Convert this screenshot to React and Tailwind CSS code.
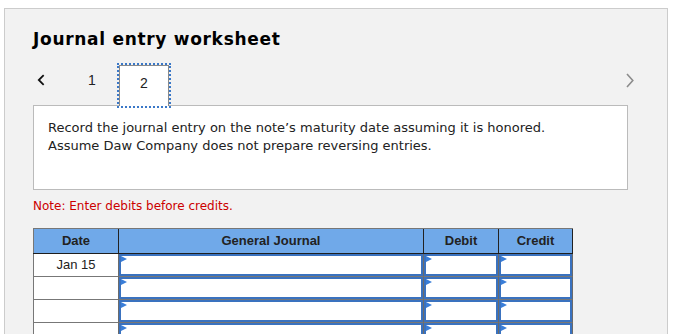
import React from "react";

const verdana = { fontFamily: '"DejaVu Sans", Verdana, sans-serif' };
const arial = { fontFamily: '"Liberation Sans", Arial, sans-serif' };

function InputCell({ w, last }) {
  return (
    <div
      className={`h-full border-l border-[#6b6b6b] ${last ? "border-r" : ""} border-b border-b-[#777] bg-[#777] ${w}`}
    >
      <div className="relative h-full border-2 border-[#3a72bf] bg-white">
        <span className="absolute left-0 top-0 h-0 w-0 border-y-[3px] border-l-[6px] border-y-transparent border-l-[#3a7ed8]"></span>
      </div>
    </div>
  );
}

function Row({ date }) {
  return (
    <div className="flex h-[23px]">
      <div
        className="flex h-full w-[85px] items-center justify-center border-b border-l border-[#777] bg-white text-[13px] text-[#222]"
        style={arial}
      >
        {date}
      </div>
      <InputCell w="w-[305px]" />
      <InputCell w="w-[75px]" />
      <InputCell w="w-[75px]" last />
    </div>
  );
}

export default function App() {
  return (
    <div className="h-[334px] overflow-hidden bg-white pl-[4px] pt-[8px]">
      <div className="h-[400px] w-[664px] border border-[#cccccc] bg-[#f2f2f2] pl-[28px] pr-[39px] pt-[20px]">
        <div
          className="h-[20px] text-[17px] font-bold leading-[20px] tracking-[0.7px] text-black"
          style={verdana}
        >
          Journal entry worksheet
        </div>

        <div className="mt-[16px] flex h-[40px] items-start">
          <div className="ml-[4px] flex h-[30px] w-[8px] items-center">
            <svg width="9" height="14" viewBox="0 0 9 14">
              <path d="M7.5 1.5 L2 7 L7.5 12.5" fill="none" stroke="#111" strokeWidth="2" />
            </svg>
          </div>
          <div
            className="ml-[22px] flex h-[30px] w-[50px] items-center justify-center text-[14px] text-[#222]"
            style={arial}
          >
            1
          </div>
          <div
            className="relative z-10 ml-[2px] flex h-[41px] w-[50px] items-start justify-center border-x border-t border-[#8a8a8a] bg-white pt-[7px] text-[14px] text-[#222] outline-2 outline-dotted outline-[#3a78c8]"
            style={arial}
          >
            2
          </div>
          <div className="-mr-[6px] ml-auto flex h-[30px] items-center">
            <svg width="8" height="15" viewBox="0 0 8 15">
              <path d="M1 1 L6.8 7.5 L1 14" fill="none" stroke="#8c8c8c" strokeWidth="1.6" />
            </svg>
          </div>
        </div>

        <div
          className="h-[85px] border border-[#bbbbbb] bg-white px-[14px] pt-[13px] text-[13px] leading-[18px] text-[#222]"
          style={verdana}
        >
          <div>Record the journal entry on the note’s maturity date assuming it is honored.</div>
          <div>Assume Daw Company does not prepare reversing entries.</div>
        </div>

        <div
          className="mt-[7px] h-[18px] text-[12px] leading-[18px] text-[#cc0000]"
          style={verdana}
        >
          Note: Enter debits before credits.
        </div>

        <div className="mt-[13px] w-[540px]">
          <div
            className="flex h-[26px] border-b border-t border-b-[#1e1e1e] border-t-[#777] bg-[#70a9e9] text-[13px] font-bold text-[#222]"
            style={arial}
          >
            <div className="flex w-[85px] items-center justify-center border-l border-[#777]">Date</div>
            <div className="flex w-[305px] items-center justify-center border-l border-[#222]">General Journal</div>
            <div className="flex w-[75px] items-center justify-center border-l border-[#222]">Debit</div>
            <div className="flex w-[75px] items-center justify-center border-x border-[#222]">Credit</div>
          </div>
          <Row date="Jan 15" />
          <Row date="" />
          <Row date="" />
          <Row date="" />
          <Row date="" />
        </div>
      </div>
    </div>
  );
}
